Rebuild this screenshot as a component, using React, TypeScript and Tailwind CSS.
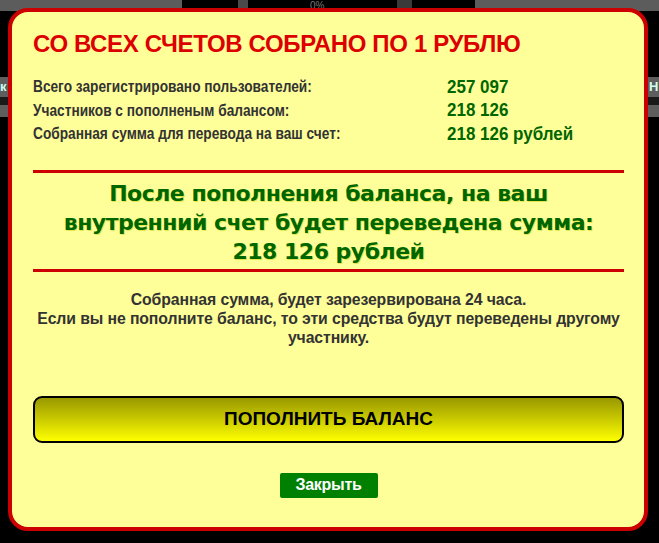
export default function App() {
  const stats = [
    { label: "Всего зарегистрировано пользователей:", value: "257 097" },
    { label: "Участников с пополненым балансом:", value: "218 126" },
    { label: "Собранная сумма для перевода на ваш счет:", value: "218 126 рублей" },
  ];

  return (
    <div className="relative w-[659px] h-[543px] overflow-hidden bg-black font-['Liberation_Sans',Arial,sans-serif]">
      {/* dimmed page behind the popup */}
      <div className="flex h-[11px]">
        <div className="w-[182px] bg-[#5c5c5c]" />
        <div className="w-[56px] bg-black" />
        <div className="w-[10px] bg-[#4a4a4a]" />
        <div className="w-[149px] bg-black text-[#777] text-[10px] leading-[11px] pl-[62px]">0%</div>
        <div className="w-[15px] bg-[#3a3a3a]" />
        <div className="w-[63px] bg-black" />
        <div className="flex-1 bg-[#5c5c5c]" />
      </div>
      <div className="h-[66px]" />
      <div className="flex justify-between">
        <div className="w-[12px] h-[20px] bg-[#5e5e5e] text-[#cfe] text-[13px] font-bold leading-[20px]">к</div>
        <div className="w-[12px] h-[20px] bg-[#5e5e5e] text-[#cfe] text-[13px] font-bold leading-[20px] pl-[2px]">Н</div>
      </div>
      <div className="h-[8px] bg-[#1a1a1a]" />
      <div className="flex justify-between">
        <div className="w-[12px] h-[12px] bg-[#5e5e5e]" />
        <div className="w-[12px] h-[12px] bg-[#5e5e5e]" />
      </div>

      {/* popup */}
      <div className="absolute left-[8px] top-[8px] w-[640px] h-[523px] rounded-[20px] border-4 border-[#cc0000] bg-[#ffff99] pl-[21px] pr-[20px] pt-[18px]">
        <h1 className="text-[24px] leading-[28px] font-bold text-[#dd0000] tracking-[-0.35px]">
          СО ВСЕХ СЧЕТОВ СОБРАНО ПО 1 РУБЛЮ
        </h1>

        <div className="mt-[17px] flex flex-col">
          {stats.map((s) => (
            <div key={s.label} className="flex h-[23.5px] items-center font-bold">
              <span className="w-[414px] text-[16.5px] text-[#333]">
                <span className="inline-block origin-left scale-x-[0.83] whitespace-nowrap">{s.label}</span>
              </span>
              <span className="text-[17.5px] text-[#006600]">
                <span className="inline-block origin-left scale-x-[0.97] whitespace-nowrap">{s.value}</span>
              </span>
            </div>
          ))}
        </div>

        <div className="mt-[24px] h-[3px] bg-[#cc0000]" />

        <p className="mt-[6px] text-center text-[22px] leading-[29px] font-bold text-[#006600] font-['DejaVu_Sans',Verdana,sans-serif] tracking-[-0.5px] [text-shadow:1px_1px_0_#e6e650]">
          После пополнения баланса, на ваш
          <br />
          внутренний счет будет переведена сумма:
          <br />
          218 126 рублей
        </p>

        <div className="mt-[3px] h-[3px] bg-[#cc0000]" />

        <p className="mt-[18px] text-center text-[15.8px] leading-[19px] font-bold text-[#333] tracking-[-0.1px]">
          Собранная сумма, будет зарезервирована 24 часа.
          <br />
          Если вы не пополните баланс, то эти средства будут переведены другому участнику.
        </p>

        <button className="mt-[49px] w-full h-[47px] rounded-[9px] border-2 border-black bg-gradient-to-b from-[#999900] to-[#ffff00] text-[19px] font-bold text-black">
          ПОПОЛНИТЬ БАЛАНС
        </button>

        <div className="mt-[30px] flex justify-center">
          <button className="w-[98px] h-[25px] rounded-[2px] bg-[#008000] text-white text-[16px] font-bold tracking-[-0.3px]">
            Закрыть
          </button>
        </div>
      </div>
    </div>
  );
}
